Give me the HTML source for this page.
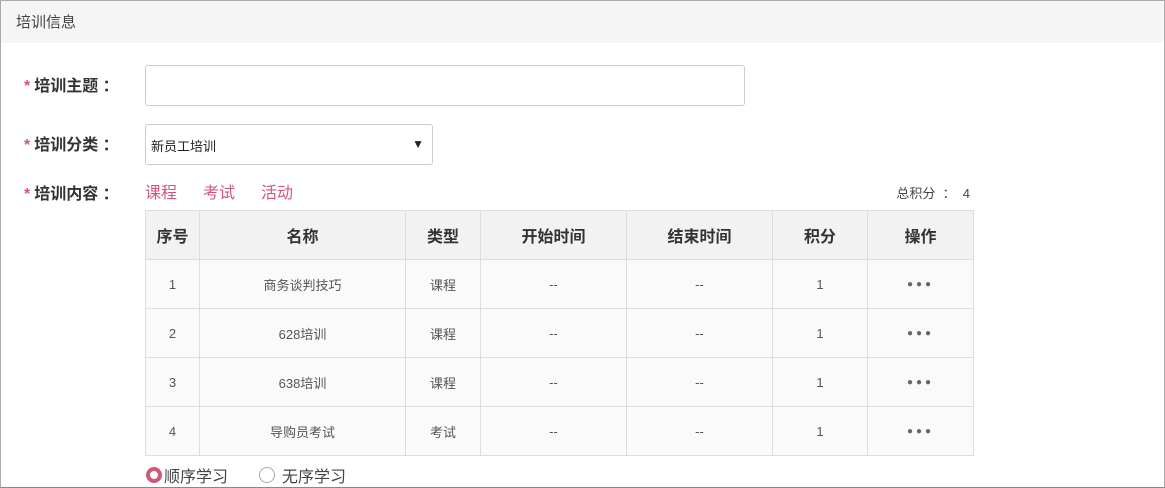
<!DOCTYPE html><html><head><meta charset="utf-8"><style>
*{margin:0;padding:0;box-sizing:border-box}
body{width:1165px;height:488px;overflow:hidden;background:#fff;font-family:"Liberation Sans","Noto Sans CJK SC",sans-serif;color:#333;position:relative}
.frame{position:absolute;left:0;top:0;width:1165px;height:488px;border:1px solid #aaa;border-bottom-color:#888}
.hd{position:absolute;left:1px;top:1px;width:1162px;height:42px;background:#f5f5f5;font-size:15px;line-height:44px;padding-left:15px;color:#444}
.lbl{position:absolute;left:24px;font-size:16px;font-weight:bold;color:#333;white-space:pre}
.lbl i{color:#d0577a;font-style:normal;margin-right:4px;font-weight:bold}
.box{position:absolute;border:1px solid #ccc;border-radius:3px;background:#fff}
.lnk{position:absolute;top:180px;font-size:16px;color:#d0577a}
table{position:absolute;left:145px;top:210px;border-collapse:collapse;font-size:13px;text-align:center}
td,th{border:1px solid #ddd;height:49px;color:#555}
th{background:#f2f2f2;font-size:16px;color:#333}
td{background:#fafafa}
.dots{letter-spacing:3px;font-size:10px;color:#666}
</style></head><body>
<div class="frame"></div>
<div class="hd">培训信息</div>
<div class="lbl" style="top:72px"><i>*</i>培训主题 ：</div>
<div class="lbl" style="top:131px"><i>*</i>培训分类 ：</div>
<div class="lbl" style="top:180px"><i>*</i>培训内容 ：</div>
<div class="box" style="left:145px;top:65px;width:600px;height:41px"></div>
<div class="box" style="left:145px;top:124px;width:288px;height:41px;font-size:13px;color:#222;line-height:43px;padding-left:5px">新员工培训<span style="position:absolute;right:8px;top:-2px;font-size:12px">▼</span></div>
<div class="lnk" style="left:145px;top:179px">课程</div>
<div class="lnk" style="left:203px;top:179px">考试</div>
<div class="lnk" style="left:261px;top:179px">活动</div>
<div style="position:absolute;left:850px;top:183px;width:120px;text-align:right;font-size:13px;color:#444;white-space:pre">总积分  ：  4</div>
<table>
<tr><th style="width:54px">序号</th><th style="width:206px">名称</th><th style="width:75px">类型</th><th style="width:146px">开始时间</th><th style="width:146px">结束时间</th><th style="width:95px">积分</th><th style="width:106px">操作</th></tr>
<tr><td>1</td><td>商务谈判技巧</td><td>课程</td><td>--</td><td>--</td><td>1</td><td class="dots">●●●</td></tr>
<tr><td>2</td><td>628培训</td><td>课程</td><td>--</td><td>--</td><td>1</td><td class="dots">●●●</td></tr>
<tr><td>3</td><td>638培训</td><td>课程</td><td>--</td><td>--</td><td>1</td><td class="dots">●●●</td></tr>
<tr><td>4</td><td>导购员考试</td><td>考试</td><td>--</td><td>--</td><td>1</td><td class="dots">●●●</td></tr>
</table>
<div style="position:absolute;left:146px;top:467px;width:16px;height:16px;border-radius:50%;border:4px solid #d0577a;background:#fff"></div>
<div style="position:absolute;left:164px;top:463px;font-size:16px;color:#444">顺序学习</div>
<div style="position:absolute;left:259px;top:467px;width:16px;height:16px;border-radius:50%;border:1px solid #aaa;background:#fff"></div>
<div style="position:absolute;left:282px;top:463px;font-size:16px;color:#444">无序学习</div>
</body></html>
